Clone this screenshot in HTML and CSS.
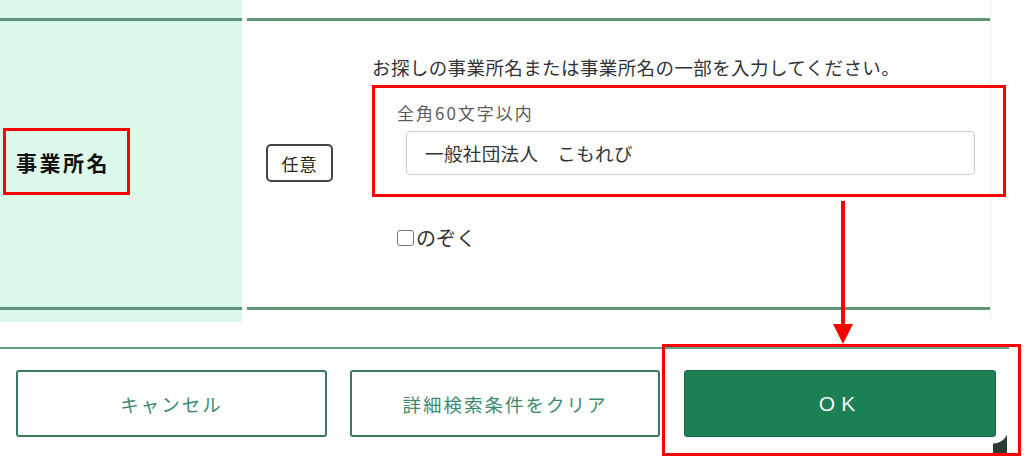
FILE: index.html
```html
<!DOCTYPE html>
<html lang="ja">
<head>
<meta charset="utf-8">
<title>事業所名検索</title>
<link rel="stylesheet" href="styles.css">
</head>
<body>
<div class="page">
  <div class="form-row">
    <div class="th">
      <div class="th-inner">
        <div class="label-box">事業所名</div>
      </div>
    </div>
    <div class="sep"></div>
    <div class="td">
      <div class="td-inner">
        <span class="badge">任意</span>
        <div class="field">
          <p class="hint">お探しの事業所名または事業所名の一部を入力してください。</p>
          <div class="input-box">
            <div class="input-label">全角60文字以内</div>
            <div class="input">一般社団法人　こもれび</div>
          </div>
          <label class="check-row"><span class="checkbox"></span><span>のぞく</span></label>
        </div>
      </div>
    </div>
  </div>
  <div class="footer">
    <div class="buttons">
      <button class="btn btn-outline btn-cancel">キャンセル</button>
      <button class="btn btn-outline btn-clear">詳細検索条件をクリア</button>
      <button class="btn btn-ok">OK</button>
    </div>
  </div>
  <div class="arrow"><div class="arrow-line"></div><div class="arrow-head"></div></div>
  <div class="ok-mark"></div>
  <div class="corner"></div>
</div>
</body>
</html>
```
FILE: styles.css
```css
html, body {
  margin: 0;
  padding: 0;
  background: #ffffff;
}
body {
  font-family: "Noto Sans CJK JP", "Noto Sans", sans-serif;
  color: #333333;
}
.page {
  position: relative;
  width: 1024px;
  height: 459px;
  overflow: hidden;
}
.form-row {
  display: flex;
  height: 322px;
}
.th {
  width: 242px;
  flex-shrink: 0;
  background: #dcf8eb;
  padding: 18px 0 12px;
  box-sizing: border-box;
}
.th-inner {
  height: 100%;
  box-sizing: border-box;
  border-top: 3px solid #5e9479;
  border-bottom: 3px solid #5e9479;
  display: flex;
  align-items: center;
}
.label-box {
  box-sizing: border-box;
  width: 127px;
  height: 67px;
  margin: -5px 0 0 3px;
  border: 3px solid #ff0000;
  display: flex;
  align-items: center;
  padding-left: 10px;
  font-weight: bold;
  font-size: 21px;
  letter-spacing: 2.5px;
  color: #111111;
}
.sep {
  width: 5px;
  flex-shrink: 0;
}
.td {
  width: 744px;
  flex-shrink: 0;
  box-sizing: border-box;
  padding: 18px 0 12px;
  border-right: 1px solid #eeeeee;
}
.td-inner {
  height: 100%;
  box-sizing: border-box;
  border-top: 3px solid #5e9479;
  border-bottom: 3px solid #5e9479;
  display: flex;
  align-items: center;
}
.badge {
  box-sizing: border-box;
  flex-shrink: 0;
  width: 67px;
  height: 38px;
  margin-left: 19px;
  border: 2px solid #444444;
  border-radius: 5px;
  display: flex;
  align-items: center;
  justify-content: center;
  font-size: 17px;
  letter-spacing: 1px;
  color: #222222;
  margin-top: -2px;
}
.field {
  flex-shrink: 0;
  align-self: flex-start;
  margin-left: 39px;
  margin-top: 32px;
}
.hint {
  margin: 0;
  font-size: 18.5px;
  letter-spacing: 0.4px;
  line-height: 28px;
  color: #333333;
  white-space: nowrap;
}
.input-box {
  box-sizing: border-box;
  width: 634px;
  margin-top: 4px;
  border: 3px solid #ff0000;
  padding: 13px 28px 19px 22px;
}
.input-label {
  font-size: 17px;
  line-height: 24px;
  letter-spacing: 2px;
  color: #5c5c5c;
}
.input {
  box-sizing: border-box;
  margin: 6px 0 0 9px;
  width: 569px;
  height: 44px;
  border: 1px solid #cfcfcf;
  border-radius: 4px;
  padding-left: 18px;
  display: flex;
  align-items: center;
  font-size: 18.5px;
  letter-spacing: 0.4px;
  color: #333333;
}
.check-row {
  display: flex;
  align-items: center;
  margin: 27px 0 0 25px;
  font-size: 20px;
  line-height: 28px;
  color: #333333;
}
.checkbox {
  box-sizing: border-box;
  width: 17px;
  height: 16px;
  border: 1.5px solid #777777;
  border-radius: 3px;
  margin-right: 2px;
}
.footer {
  margin-top: 25px;
}
.footer::before {
  content: "";
  display: block;
  width: 1009px;
  height: 2px;
  background: #5f9f82;
}
.buttons {
  display: flex;
  gap: 23px;
  padding-left: 16px;
  margin-top: 21px;
}
.btn {
  box-sizing: border-box;
  flex-shrink: 0;
  height: 67px;
  border-radius: 3px;
  font-family: "Noto Sans CJK JP", "Noto Sans", sans-serif;
  font-size: 18.5px;
  letter-spacing: 2px;
  cursor: pointer;
}
.btn-outline {
  background: #ffffff;
  border: 2px solid #3b7a5d;
  color: #3e8a70;
}
.btn-cancel {
  width: 311px;
}
.btn-clear {
  width: 310px;
  margin-right: 1px;
}
.btn-ok {
  width: 312px;
  background: #1b8053;
  border: 1px solid #166b45;
  color: #f4f4f4;
  font-family: "Liberation Sans", Arial, sans-serif;
  font-size: 21px;
  letter-spacing: 6px;
  padding-left: 6px;
}
.arrow {
  position: absolute;
  left: 833px;
  top: 201px;
  width: 20px;
  display: flex;
  flex-direction: column;
  align-items: center;
}
.arrow-line {
  width: 4px;
  height: 123px;
  background: #ff0000;
}
.arrow-head {
  width: 0;
  height: 0;
  border-left: 10px solid transparent;
  border-right: 10px solid transparent;
  border-top: 20px solid #ff0000;
}
.ok-mark {
  position: absolute;
  left: 662px;
  top: 344px;
  width: 359px;
  height: 112px;
  box-sizing: border-box;
  border: 3px solid #ff0000;
}
.corner {
  position: absolute;
  left: 993px;
  top: 428px;
  width: 14px;
  height: 25px;
  background: radial-gradient(circle at 0 0, transparent 15px, #2d3b35 16px);
}
```
